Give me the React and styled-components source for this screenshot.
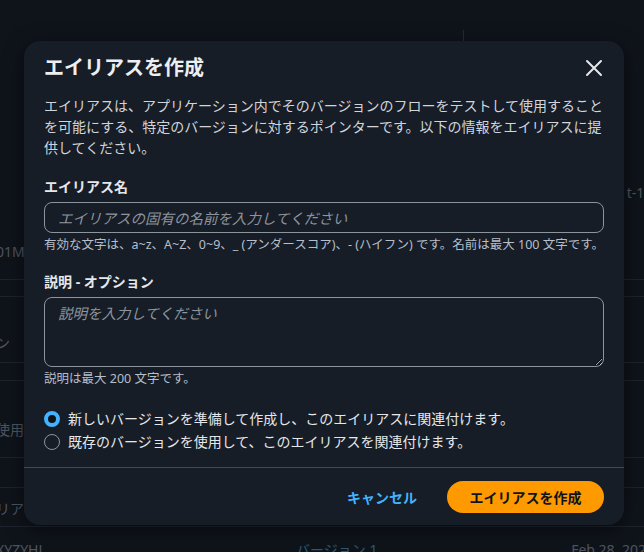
import React from "react";
import styled, { createGlobalStyle } from "styled-components";

const GlobalStyle = createGlobalStyle`
  html, body {
    margin: 0;
    padding: 0;
    background: #0f141a;
  }
  body {
    font-family: "Noto Sans", "Noto Sans CJK JP", sans-serif;
    color: #d1d5db;
    -webkit-font-smoothing: antialiased;
  }
  * { box-sizing: border-box; }
`;

// faint table rows of the page that sits behind the dialog
const bgRows = [
  { h: 180 },
  { h: 26, right: "t-1:" },
  { h: 34 },
  { h: 24, left: "01M" },
  { h: 16, line: true },
  { h: 17, line: true },
  { h: 33 },
  { h: 26, left: "ン" },
  { h: 7, line: true },
  { h: 18, line: true },
  { h: 36 },
  { h: 26, left: "使用" },
  { h: 15, line: true },
  { h: 30, line: true },
  { h: 8 },
  { h: 26, left: "リアス" },
  { h: 5, line: true },
];

function App() {
  return (
    <>
      <GlobalStyle />
      <Page>
        <BackTable>
          {bgRows.map((r, i) => (
            <BackRow key={i} $h={r.h} $line={r.line}>
              <span>{r.left}</span>
              <span>{r.right}</span>
            </BackRow>
          ))}
          <BackRow $h={25} $bottom>
            <span>XYZYHJ</span>
            <BackLink>バージョン 1</BackLink>
            <span>Feb 28, 2025</span>
          </BackRow>
        </BackTable>
        <BackDivider />

        <Modal role="dialog" aria-labelledby="dlg-title">
          <Header>
            <Title id="dlg-title">エイリアスを作成</Title>
            <CloseButton aria-label="閉じる">
              <svg width="18" height="18" viewBox="0 0 18 18" fill="none">
                <path
                  d="M2 2L16 16M16 2L2 16"
                  stroke="#e5e7eb"
                  strokeWidth="2"
                  strokeLinecap="round"
                />
              </svg>
            </CloseButton>
          </Header>

          <Body>
            <Description>
              エイリアスは、アプリケーション内でそのバージョンのフローをテストして使用することを可能にする、特定のバージョンに対するポインターです。以下の情報をエイリアスに提供してください。
            </Description>

            <Field>
              <Label htmlFor="alias-name">エイリアス名</Label>
              <TextInput
                id="alias-name"
                placeholder="エイリアスの固有の名前を入力してください"
              />
              <Hint>
                有効な文字は、a~z、A~Z、0~9、_ (アンダースコア)、- (ハイフン) です。名前は最大 100 文字です。
              </Hint>
            </Field>

            <Field>
              <Label htmlFor="alias-desc">説明 - オプション</Label>
              <TextArea id="alias-desc" placeholder="説明を入力してください" />
              <Hint>説明は最大 200 文字です。</Hint>
            </Field>

            <RadioGroup>
              <RadioRow>
                <Radio $checked />
                <span>新しいバージョンを準備して作成し、このエイリアスに関連付けます。</span>
              </RadioRow>
              <RadioRow>
                <Radio />
                <span>既存のバージョンを使用して、このエイリアスを関連付けます。</span>
              </RadioRow>
            </RadioGroup>
          </Body>

          <Footer>
            <LinkButton>キャンセル</LinkButton>
            <PrimaryButton>エイリアスを作成</PrimaryButton>
          </Footer>
        </Modal>
      </Page>
    </>
  );
}

const Page = styled.div`
  position: relative;
  width: 644px;
  height: 552px;
  overflow: hidden;
  background: #0f141b;
`;

const BackTable = styled.div`
  display: flex;
  flex-direction: column;
`;

const BackRow = styled.div`
  flex: none;
  height: ${(p) => p.$h}px;
  display: flex;
  align-items: ${(p) => (p.$bottom ? "flex-end" : "center")};
  justify-content: space-between;
  border-bottom: 1px solid ${(p) => (p.$line ? "#1e242d" : "transparent")};
  font-size: 14px;
  line-height: 20px;
  color: #4e555f;
  white-space: nowrap;

  span {
    margin-bottom: ${(p) => (p.$bottom ? "-9px" : "0")};
  }
  span:first-child {
    margin-left: -4px;
  }
  span:last-child {
    margin-right: ${(p) => (p.$bottom ? "-10px" : "-4px")};
  }
`;

const BackLink = styled.span`
  color: #2b5878;
  margin-left: 60px;
`;

const BackDivider = styled.div`
  position: absolute;
  left: 463px;
  top: 30px;
  width: 1px;
  height: 12px;
  background: #252c36;
`;

const Modal = styled.div`
  position: absolute;
  left: 24px;
  top: 41px;
  width: 600px;
  height: 484px;
  background: #161d27;
  border-radius: 16px;
  box-shadow: 0 4px 20px rgba(0, 0, 0, 0.5);
  display: flex;
  flex-direction: column;
`;

const Header = styled.div`
  display: flex;
  align-items: center;
  justify-content: space-between;
  padding: 12px 20px 0 20px;
`;

const Title = styled.h2`
  margin: 0;
  font-size: 20px;
  line-height: 30px;
  font-weight: 700;
  color: #eceff1;
`;

const CloseButton = styled.button`
  display: flex;
  align-items: center;
  justify-content: center;
  width: 24px;
  height: 24px;
  padding: 0;
  margin-right: -2px;
  border: none;
  background: none;
  cursor: pointer;
`;

const Body = styled.div`
  display: flex;
  flex-direction: column;
  padding: 12px 20px 0 20px;
  flex: 1;
`;

const Description = styled.p`
  margin: 0 0 18px 0;
  font-size: 14px;
  line-height: 21px;
  color: #d1d5db;
`;

const Field = styled.div`
  display: flex;
  flex-direction: column;
  margin-bottom: 18px;
`;

const Label = styled.label`
  font-size: 14px;
  line-height: 22px;
  font-weight: 700;
  color: #e5e7eb;
  margin-bottom: 4px;
`;

const inputBase = `
  width: 100%;
  background: #161d27;
  border: 1px solid #8c949e;
  border-radius: 8px;
  color: #e5e7eb;
  font-family: "Noto Sans", "Noto Sans CJK JP", sans-serif;
  font-size: 14.5px;
  outline: none;

  &::placeholder {
    color: #8d949d;
    font-style: italic;
  }
`;

const TextInput = styled.input`
  ${inputBase}
  height: 31px;
  padding: 0 13px;
`;

const TextArea = styled.textarea`
  ${inputBase}
  height: 70px;
  padding: 4px 13px;
  line-height: 22px;
  resize: vertical;
`;

const Hint = styled.div`
  margin-top: 4px;
  font-size: 12.5px;
  line-height: 16px;
  color: #b6bec9;
  white-space: nowrap;
`;

const RadioGroup = styled.div`
  display: flex;
  flex-direction: column;
  gap: 3px;
  margin-top: 4px;
`;

const RadioRow = styled.label`
  display: flex;
  align-items: center;
  gap: 8px;
  font-size: 14px;
  line-height: 20px;
  color: #e5e7eb;
`;

const Radio = styled.span`
  flex: none;
  width: 16px;
  height: 16px;
  border-radius: 50%;
  border: ${(p) => (p.$checked ? "4px solid #42b4ff" : "1px solid #8c949e")};
  background: ${(p) => (p.$checked ? "#0f141a" : "transparent")};
`;

const Footer = styled.div`
  display: flex;
  align-items: center;
  justify-content: flex-end;
  gap: 30px;
  height: 58px;
  padding: 0 20px;
  border-top: 1px solid #414954;
`;

const LinkButton = styled.button`
  border: none;
  background: none;
  padding: 0;
  font-family: inherit;
  font-size: 14px;
  font-weight: 700;
  color: #42b4ff;
  cursor: pointer;
`;

const PrimaryButton = styled.button`
  height: 32px;
  width: 157px;
  border: none;
  border-radius: 16px;
  background: #ff9900;
  color: #0f141a;
  font-family: inherit;
  font-size: 14px;
  font-weight: 700;
  cursor: pointer;
`;

export default App;
